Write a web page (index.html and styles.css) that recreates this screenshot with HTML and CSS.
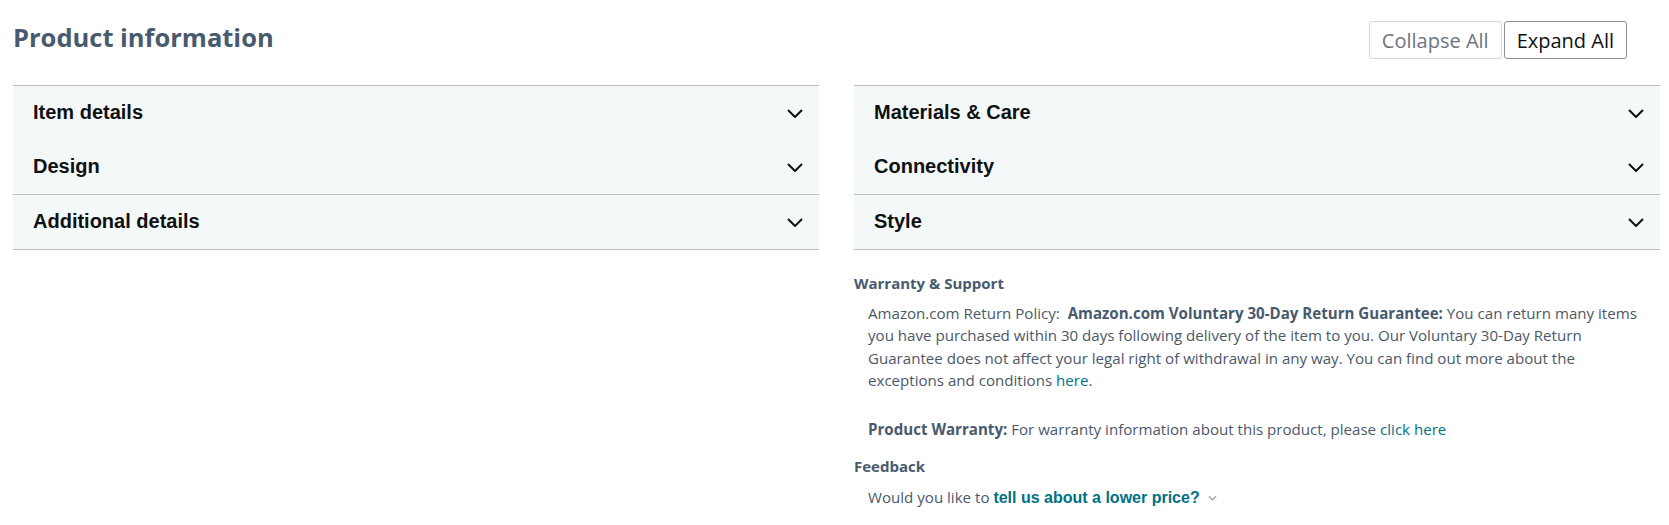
FILE: index.html
```html
<!DOCTYPE html>
<html lang="en">
<head>
    <meta charset="UTF-8">
    <meta name="viewport" content="width=device-width, initial-scale=1.0">
    <title>Product information</title>
    <link rel="stylesheet" href="styles.css">
</head>
<body>
    <div class="page">
        <div class="page-header">
            <h2 class="page-title">Product information</h2>
            <div class="toggle-all">
                <button class="btn btn-muted">Collapse All</button>
                <button class="btn">Expand All</button>
            </div>
        </div>

        <div class="columns">
            <div class="column">
                <div class="acc-group">
                    <div class="acc-row">
                        <span>Item details</span>
                        <svg class="chev" viewBox="0 0 16 9"><path d="M1 1l7 7 7-7"/></svg>
                    </div>
                    <div class="acc-row">
                        <span>Design</span>
                        <svg class="chev" viewBox="0 0 16 9"><path d="M1 1l7 7 7-7"/></svg>
                    </div>
                </div>
                <div class="acc-group acc-last">
                    <div class="acc-row">
                        <span>Additional details</span>
                        <svg class="chev" viewBox="0 0 16 9"><path d="M1 1l7 7 7-7"/></svg>
                    </div>
                </div>
            </div>

            <div class="column">
                <div class="acc-group">
                    <div class="acc-row">
                        <span>Materials &amp; Care</span>
                        <svg class="chev" viewBox="0 0 16 9"><path d="M1 1l7 7 7-7"/></svg>
                    </div>
                    <div class="acc-row">
                        <span>Connectivity</span>
                        <svg class="chev" viewBox="0 0 16 9"><path d="M1 1l7 7 7-7"/></svg>
                    </div>
                </div>
                <div class="acc-group acc-last">
                    <div class="acc-row">
                        <span>Style</span>
                        <svg class="chev" viewBox="0 0 16 9"><path d="M1 1l7 7 7-7"/></svg>
                    </div>
                </div>

                <div class="support">
                    <h3 class="support-title">Warranty &amp; Support</h3>
                    <p class="support-text">
                        Amazon.com Return Policy:&nbsp; <b>Amazon.com Voluntary 30-Day Return Guarantee:</b> You can return many items you have purchased within 30 days following delivery of the item to you. Our Voluntary 30-Day Return Guarantee does not affect your legal right of withdrawal in any way. You can find out more about the exceptions and conditions <a href="#">here</a>.
                    </p>
                    <p class="support-text warranty">
                        <b>Product Warranty:</b> For warranty information about this product, please <a href="#">click here</a>
                    </p>

                    <h3 class="support-title feedback-title">Feedback</h3>
                    <p class="support-text feedback">
                        Would you like to <a href="#" class="price-link">tell us about a lower price?</a>
                        <svg class="mini-chev" viewBox="0 0 10 6"><path d="M1 1l4 4 4-4"/></svg>
                    </p>
                </div>
            </div>
        </div>
    </div>
</body>
</html>
```

FILE: styles.css
```css
body {
    margin: 0;
    font-family: 'Open Sans', sans-serif;
    color: #4b5869;
    background: #fff;
}
.page {
    padding: 0 9px 0 13px;
}
.page-header {
    display: flex;
    justify-content: space-between;
    align-items: center;
    padding-top: 21px;
    height: 38px;
    margin-bottom: 26px;
}
.page-title {
    margin: -6px 0 0;
    font-size: 25.5px;
    font-weight: 700;
    color: #485a6e;
}
.toggle-all {
    display: flex;
    gap: 2px;
    margin-right: 33px;
}
.btn {
    height: 38px;
    padding: 0 12px;
    font-family: 'Open Sans', sans-serif;
    font-size: 20px;
    color: #0f1111;
    background: #fff;
    border: 1px solid #8d9096;
    border-radius: 3px;
}
.btn-muted {
    color: #6b7480;
    border-color: #d5d9d9;
}
.columns {
    display: grid;
    grid-template-columns: 806px 806px;
    gap: 35px;
}
.acc-group {
    background: #f5f8f9;
    border-top: 1px solid #bbbfbf;
}
.acc-last {
    border-bottom: 1px solid #bbbfbf;
}
.acc-row {
    display: flex;
    justify-content: space-between;
    align-items: center;
    height: 54px;
    padding: 0 16px 0 20px;
    font-family: 'Liberation Sans', Arial, sans-serif;
    font-size: 20px;
    font-weight: 700;
    color: #0f1111;
}
.acc-row span {
    margin-top: -2px;
}
.chev {
    width: 16px;
    height: 9px;
    fill: none;
    stroke: #0f1111;
    stroke-width: 2;
}
.support {
    padding-top: 22px;
}
.support-title {
    margin: 0;
    font-size: 15px;
    line-height: 22px;
    font-weight: 700;
    color: #485a6e;
}
.support-text {
    margin: 8px 0 0;
    padding: 0 16px 0 14px;
    font-size: 15.1px;
    line-height: 22.4px;
}
.support-text b {
    color: #485a6e;
}
.support-text a {
    color: #007185;
    text-decoration: none;
}
.warranty {
    margin-top: 26px;
}
.feedback-title {
    margin-top: 15px;
}
.feedback {
    margin-top: 9px;
}
.support-text .price-link {
    font-family: 'Liberation Sans', Arial, sans-serif;
    font-weight: 700;
    font-size: 16px;
}
.mini-chev {
    width: 9px;
    height: 6px;
    margin-left: 4px;
    vertical-align: 2px;
    fill: none;
    stroke: #a0a4a8;
    stroke-width: 1.5;
}
```
